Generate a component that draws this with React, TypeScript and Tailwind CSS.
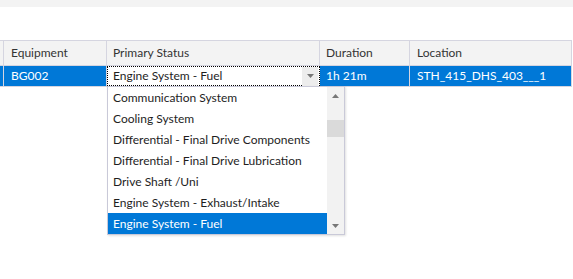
import React from "react";

const items = [
  "Communication System",
  "Cooling System",
  "Differential - Final Drive Components",
  "Differential - Final Drive Lubrication",
  "Drive Shaft /Uni",
  "Engine System - Exhaust/Intake",
  "Engine System - Fuel",
];

function Tri({ down = true }: { down?: boolean }) {
  return (
    <svg width="7" height="4" viewBox="0 0 7 4">
      {down ? <polygon points="0,0 7,0 3.5,4" fill="#777" /> : <polygon points="0,4 7,4 3.5,0" fill="#777" />}
    </svg>
  );
}

export default function App() {
  return (
    <div className="relative w-[573px] h-[279px] bg-white overflow-hidden text-[12px] text-[#1e1e1e]" style={{ fontFamily: '"Lato", "Noto Sans", sans-serif' }}>
      <div className="h-[7px] bg-[#f3f3f3]" />
      <div className="mt-[33px] w-[572px]">
        {/* header */}
        <div className="flex h-[26px] border-y border-[#d5d5e0] bg-[#f3f3f3] text-[#333]">
          <div className="w-[4px] border-r border-[#d5d5e0]" />
          <div className="w-[103px] border-r border-[#d5d5e0] pl-[7px] flex items-center">Equipment</div>
          <div className="w-[213px] border-r border-[#d5d5e0] pl-[6px] flex items-center">Primary Status</div>
          <div className="w-[90px] border-r border-[#d5d5e0] pl-[6px] flex items-center">Duration</div>
          <div className="w-[162px] border-r border-[#d5d5e0] pl-[7px] flex items-center">Location</div>
        </div>
        {/* data row */}
        <div className="flex h-[21px] border-b border-[#d5d5e0] text-white">
          <div className="w-[4px] border-r border-[#d5d5e0] bg-[#0078d7]" />
          <div className="w-[103px] border-r border-[#d5d5e0] bg-[#0078d7] pl-[7px] flex items-center">BG002</div>
          <div className="w-[213px] bg-white border border-dotted border-black flex items-center text-[#1e1e1e]">
            <span className="flex-1 pl-[5px]">Engine System - Fuel</span>
            <div className="w-[16px] h-[19px] bg-[#ededed] flex items-center justify-center mr-[1px]">
              <Tri />
            </div>
          </div>
          <div className="w-[90px] border-r border-[#d5d5e0] bg-[#0078d7] pl-[6px] flex items-center">1h 21m</div>
          <div className="w-[162px] border-r border-[#d5d5e0] bg-[#0078d7] pl-[7px] flex items-center">STH_415_DHS_403___1</div>
        </div>
      </div>
      {/* dropdown */}
      <div className="absolute left-[107px] top-[86px] w-[238px] h-[149px] bg-white border border-[#c9c9d8] shadow-[1px_1px_2px_rgba(0,0,0,0.12)] flex">
        <div className="flex-1 flex flex-col">
          {items.map((t, i) => (
            <div
              key={t}
              className={
                i === items.length - 1
                  ? "h-[21px] pl-[5px] flex items-center bg-[#0078d7] text-white"
                  : "h-[21px] pl-[5px] flex items-center"
              }
            >
              {t}
            </div>
          ))}
        </div>
        <div className="w-[17px] bg-[#f2f2f2] flex flex-col">
          <div className="h-[17px] flex items-center justify-center"><Tri down={false} /></div>
          <div className="h-[16px]" />
          <div className="h-[17px] bg-[#dadada]" />
          <div className="flex-1" />
          <div className="h-[17px] flex items-center justify-center"><Tri /></div>
        </div>
      </div>
    </div>
  );
}
